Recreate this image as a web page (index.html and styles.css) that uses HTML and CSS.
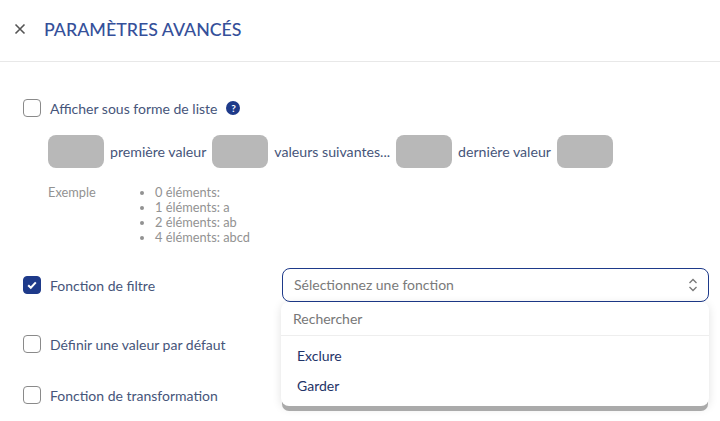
FILE: index.html
```html
<!DOCTYPE html>
<html lang="fr">

<head>
	<meta charset="UTF-8">
	<meta name="viewport" content="width=device-width, initial-scale=1.0">
	<title>Paramètres avancés</title>
	<link rel="stylesheet" href="styles.css">
</head>

<body>
	<header class="head">
		<svg class="close" width="12" height="12" viewBox="0 0 12 12">
			<path d="M1.5 1.5l9 9M10.5 1.5l-9 9" />
		</svg>
		<h1 class="title">PARAMÈTRES AVANCÉS</h1>
	</header>

	<main class="content">
		<div class="row row-list">
			<span class="check"></span>
			<span class="label">Afficher sous forme de liste</span>
			<span class="help">?</span>
		</div>

		<div class="chips">
			<span class="chip"></span>
			<span class="chip-text">première valeur</span>
			<span class="chip"></span>
			<span class="chip-text">valeurs suivantes...</span>
			<span class="chip"></span>
			<span class="chip-text">dernière valeur</span>
			<span class="chip"></span>
		</div>

		<div class="sample">
			<div class="sample-name">Exemple</div>
			<ul class="sample-list">
				<li>0 éléments:</li>
				<li>1 éléments: a</li>
				<li>2 éléments: ab</li>
				<li>4 éléments: abcd</li>
			</ul>
		</div>

		<div class="row row-filter">
			<span class="check checked">
				<svg width="12" height="12" viewBox="0 0 12 12">
					<path d="M2.2 6.2l2.6 2.6 5-5.4" />
				</svg>
			</span>
			<span class="label label-filter">Fonction de filtre</span>
			<div class="select-wrap">
				<div class="select">
					<span>Sélectionnez une fonction</span>
					<svg class="arrows" width="10" height="14" viewBox="0 0 10 14">
						<path d="M1.5 5l3.5-3.5 3.5 3.5M1.5 9l3.5 3.5 3.5-3.5" />
					</svg>
				</div>
				<div class="menu">
					<div class="menu-search">Rechercher</div>
					<div class="menu-item">Exclure</div>
					<div class="menu-item">Garder</div>
				</div>
			</div>
		</div>

		<div class="row row-default">
			<span class="check"></span>
			<span class="label">Définir une valeur par défaut</span>
		</div>

		<div class="row row-transform">
			<span class="check"></span>
			<span class="label">Fonction de transformation</span>
		</div>
	</main>
</body>

</html>
```

FILE: styles.css
```css
body {
	margin: 0;
	min-height: 421px;
	background: #fff;
	color: #46557a;
	font-family: "Lato", "Liberation Sans", sans-serif;
	font-size: 14px;
}

.head {
	display: flex;
	align-items: center;
	height: 57px;
	padding: 0 0 4px 14px;
	border-bottom: 1px solid #e8e8e8;
}

.close {
	margin-right: 18px;
}

.close path {
	fill: none;
	stroke: #555;
	stroke-width: 1.6;
}

.title {
	margin: 0;
	color: #35509a;
	font-size: 17.8px;
	font-weight: 500;
}

.content {
	padding: 37px 0 0 23px;
}

.row {
	display: flex;
	align-items: center;
}

.row-list {
	height: 18px;
}

.check {
	box-sizing: border-box;
	display: flex;
	align-items: center;
	justify-content: center;
	flex: none;
	width: 18px;
	height: 18px;
	margin-right: 9px;
	border: 1.5px solid #8a8a8a;
	border-radius: 4px;
}

.checked {
	border-color: #1e3a8a;
	background: #1e3a8a;
}

.checked path {
	fill: none;
	stroke: #fff;
	stroke-width: 2;
}

.help {
	width: 14px;
	height: 14px;
	margin-left: 9px;
	border-radius: 50%;
	background: #1e3a8a;
	color: #fff;
	font-size: 10px;
	font-weight: 700;
	line-height: 14px;
	text-align: center;
}

.chips {
	display: flex;
	align-items: center;
	gap: 6px;
	margin: 18px 0 0 25px;
	font-size: 14.15px;
}

.chip {
	width: 56px;
	height: 33px;
	border-radius: 8px;
	background: #b8b8b8;
}

.sample {
	display: flex;
	margin: 17px 0 0 25px;
	color: #929292;
	font-size: 12.8px;
	line-height: 15px;
}

.sample-name {
	width: 94px;
}

.sample-list {
	margin: 0;
	padding: 0 0 0 13px;
}

.row-filter {
	margin-top: 23px;
}

.label-filter {
	width: 232px;
}

.select-wrap {
	position: relative;
	width: 427px;
}

.select {
	box-sizing: border-box;
	display: flex;
	align-items: center;
	justify-content: space-between;
	height: 34px;
	padding: 0 10px 1px 11px;
	border: 1.5px solid #1e3a8a;
	border-radius: 8px;
	color: #7a7a7a;
}

.arrows path {
	fill: none;
	stroke: #777;
	stroke-width: 1.3;
}

.menu {
	position: absolute;
	top: 34px;
	left: -1px;
	z-index: 10;
	width: 428px;
	height: 104px;
	border-radius: 8px;
	background: #fff;
	box-shadow: 0 6px 0 -1px #aaa, 0 2px 10px rgba(0, 0, 0, 0.12);
}

.menu-search {
	height: 33px;
	padding-left: 12px;
	border-bottom: 1px solid #eee;
	color: #777;
	line-height: 34px;
}

.menu-item {
	height: 30px;
	padding-left: 16px;
	color: #1f3468;
	line-height: 30px;
}

.menu-search + .menu-item {
	margin-top: 5px;
}

.row-default {
	margin-top: 33px;
}

.row-transform {
	margin-top: 33px;
}
```
